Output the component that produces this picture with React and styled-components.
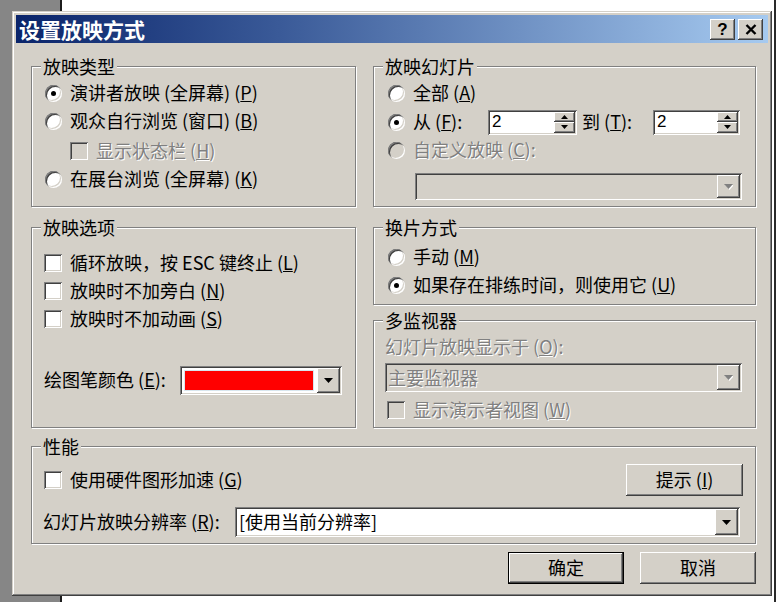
import React from 'react'
import styled, { createGlobalStyle } from 'styled-components'

const FACE = '#d4d0c8'
const RAISED = `inset -1px -1px #404040, inset 1px 1px #fff, inset -2px -2px #808080, inset 2px 2px ${FACE}`
const SUNKEN = `inset 1px 1px #808080, inset -1px -1px #fff, inset 2px 2px #404040, inset -2px -2px ${FACE}`

const GlobalStyle = createGlobalStyle`
  *, *::before, *::after { box-sizing: border-box; }
  html, body { margin: 0; padding: 0; }
  body {
    width: 779px;
    height: 602px;
    overflow: hidden;
    background: #fff;
    font-family: "Noto Sans CJK SC", "Noto Sans", sans-serif;
    font-size: 18px;
    line-height: 1.2;
    color: #000;
  }
`

const Desktop = styled.div`
  position: relative;
  display: flex;
  width: 779px;
  height: 602px;
  background: #fff;
`

const SideStrip = styled.div`
  width: 62px;
  background: #868686;
  border-right: 2px solid #1c1c1c;
`

const BackWindow = styled.div`
  width: 714px;
  background: #fff;
  border-right: 2px solid #2a2a2a;
`

const Dialog = styled.div`
  position: absolute;
  left: 12px;
  top: 11px;
  width: 760px;
  height: 585px;
  padding: 4px;
  display: flex;
  flex-direction: column;
  background: ${FACE};
  box-shadow: inset -1px -1px #404040, inset 1px 1px ${FACE}, inset -2px -2px #808080, inset 2px 2px #fff;
`

const TitleBar = styled.div`
  height: 28px;
  display: flex;
  align-items: center;
  padding: 0 5px 0 3px;
  background: linear-gradient(90deg, #0a246a 0%, #3a5a98 35%, #a6caf0 100%);
  color: #fff;
`

const Title = styled.span`
  flex: 1;
  font-size: 21px;
  font-weight: bold;
  line-height: 28px;
`

const CaptionButtons = styled.div`
  display: flex;
  gap: 3px;
`

const CaptionButton = styled.div`
  width: 25px;
  height: 21px;
  display: grid;
  place-items: center;
  background: ${FACE};
  box-shadow: ${RAISED};
  color: #000;
  font: bold 17px "Liberation Sans", sans-serif;
  line-height: 1;
`

const Client = styled.div`
  flex: 1;
  display: flex;
  flex-direction: column;
  padding: 13px 12px 8px 15px;
`

const MainGrid = styled.div`
  display: grid;
  grid-template-columns: 325px 383px;
  grid-template-rows: 151px 211px;
  column-gap: 17px;
  row-gap: 10px;
`

const Stack = styled.div`
  display: flex;
  flex-direction: column;
`

const Group = styled.div`
  position: relative;
  display: flex;
  flex-direction: column;
  align-items: flex-start;
  margin-top: ${p => p.$mt ?? 10}px;
  height: ${p => (p.$h ? `${p.$h}px` : 'auto')};
  flex: ${p => (p.$grow ? 1 : 'none')};
  padding: ${p => p.$pad};
  border: 1px solid #808080;
  box-shadow: inset 1px 1px #fff, 1px 1px #fff;
`

const Legend = styled.span`
  position: absolute;
  top: -11px;
  left: 9px;
  padding: 0 2px;
  background: ${FACE};
  line-height: 20px;
`

const Row = styled.div`
  display: flex;
  align-items: center;
  gap: 8px;
  height: ${p => p.$h || 28}px;
  margin-top: ${p => p.$mt || 0}px;
  margin-left: ${p => p.$ml || 0}px;
  align-self: ${p => (p.$full ? 'stretch' : 'flex-start')};
  justify-content: ${p => (p.$split ? 'space-between' : 'flex-start')};
  white-space: nowrap;
  color: ${p => (p.$disabled ? '#808080' : '#000')};
  text-shadow: ${p => (p.$disabled ? '1px 1px #fff' : 'none')};
`

const Label = styled.span`
  display: inline-block;
  width: ${p => (p.$w ? `${p.$w}px` : 'auto')};
  margin-left: ${p => p.$ml || 0}px;
`

const Radio = styled.span`
  width: 17px;
  height: 17px;
  flex: none;
  display: grid;
  place-items: center;
  border-radius: 50%;
  background: ${p => (p.$disabled ? FACE : '#fff')};
  box-shadow: inset 1px 1px #808080, inset -1px -1px #fff, inset 2px 2px #404040, inset -2px -2px ${FACE};

  &::after {
    content: '';
    display: ${p => (p.$checked ? 'block' : 'none')};
    width: 5px;
    height: 5px;
    border-radius: 50%;
    background: #000;
  }
`

const Check = styled.span`
  width: 18px;
  height: 18px;
  flex: none;
  background: ${p => (p.$disabled ? FACE : '#fff')};
  box-shadow: ${SUNKEN};
`

const Field = styled.div`
  display: flex;
  width: ${p => (p.$w ? `${p.$w}px` : 'auto')};
  flex: ${p => (p.$w ? 'none' : 1)};
  height: ${p => p.$h || 27}px;
  margin-top: ${p => p.$mt || 0}px;
  margin-left: ${p => p.$ml || 0}px;
  margin-right: ${p => p.$mr || 0}px;
  padding: 2px;
  background: ${p => (p.$disabled ? FACE : '#fff')};
  box-shadow: ${SUNKEN};
  color: ${p => (p.$disabled ? '#808080' : '#000')};
  text-shadow: ${p => (p.$disabled ? '1px 1px #fff' : 'none')};
`

const FieldText = styled.span`
  flex: 1;
  display: flex;
  align-items: center;
  padding-left: ${p => p.$pl ?? 3}px;
  white-space: nowrap;
  font-family: ${p => (p.$latin ? '"Liberation Sans", sans-serif' : 'inherit')};
  font-size: ${p => (p.$latin ? '17px' : 'inherit')};
`

const Swatch = styled.span`
  flex: 1;
  margin: 2px 3px 2px 2px;
  background: #ff0000;
  border: 1px solid #d8e6ee;
`

const DropButton = styled.div`
  width: ${p => p.$w || 23}px;
  flex: none;
  display: grid;
  place-items: center;
  background: ${FACE};
  box-shadow: ${RAISED};
`

const SpinButtons = styled.div`
  width: 21px;
  flex: none;
  display: flex;
  flex-direction: column;
`

const SpinButton = styled.div`
  flex: 1;
  display: grid;
  place-items: center;
  background: ${FACE};
  box-shadow: ${RAISED};
`

const PushButton = styled.div`
  width: ${p => p.$w || 116}px;
  height: 32px;
  display: grid;
  place-items: center;
  background: ${FACE};
  border: ${p => (p.$default ? '1px solid #000' : 'none')};
  box-shadow: ${RAISED};
`

const ButtonBar = styled.div`
  display: flex;
  justify-content: flex-end;
  gap: 16px;
  margin-top: 8px;
`

const Arrow = ({ dir = 'down', disabled, w = 9, h = 5 }) => (
  <svg width={w} height={h + (disabled ? 1 : 0)} viewBox={`0 0 ${w} ${h + (disabled ? 1 : 0)}`}>
    {disabled && (
      <polygon
        points={dir === 'down' ? `1,1 ${w + 1},1 ${w / 2 + 1},${h + 1}` : `${w / 2 + 1},1 ${w + 1},${h + 1} 1,${h + 1}`}
        fill="#fff"
      />
    )}
    <polygon
      points={dir === 'down' ? `0,0 ${w},0 ${w / 2},${h}` : `${w / 2},0 ${w},${h} 0,${h}`}
      fill={disabled ? '#808080' : '#000'}
    />
  </svg>
)

const CloseGlyph = () => (
  <svg width="12" height="11" viewBox="0 0 12 11">
    <path d="M1.5 1 L10.5 10 M10.5 1 L1.5 10" stroke="#000" strokeWidth="2.4" />
  </svg>
)

const Spin = ({ value, w }) => (
  <Field $w={w} $h={25}>
    <FieldText $latin $pl={2}>{value}</FieldText>
    <SpinButtons>
      <SpinButton><Arrow dir="up" w={7} h={4} /></SpinButton>
      <SpinButton><Arrow dir="down" w={7} h={4} /></SpinButton>
    </SpinButtons>
  </Field>
)

export default function App() {
  return (
    <>
      <GlobalStyle />
      <Desktop>
        <SideStrip />
        <BackWindow />

        <Dialog>
          <TitleBar>
            <Title>设置放映方式</Title>
            <CaptionButtons>
              <CaptionButton>?</CaptionButton>
              <CaptionButton><CloseGlyph /></CaptionButton>
            </CaptionButtons>
          </TitleBar>

          <Client>
            <MainGrid>
              <Group $pad="12px 0 0 13px">
                <Legend>放映类型</Legend>
                <Row $h={28}>
                  <Radio $checked />
                  <span>演讲者放映 (全屏幕) (<u>P</u>)</span>
                </Row>
                <Row $h={28}>
                  <Radio />
                  <span>观众自行浏览 (窗口) (<u>B</u>)</span>
                </Row>
                <Row $h={32} $ml={25} $disabled>
                  <Check $disabled />
                  <span>显示状态栏 (<u>H</u>)</span>
                </Row>
                <Row $h={24}>
                  <Radio />
                  <span>在展台浏览 (全屏幕) (<u>K</u>)</span>
                </Row>
              </Group>

              <Group $pad="12px 0 0 14px">
                <Legend>放映幻灯片</Legend>
                <Row $h={28}>
                  <Radio />
                  <span>全部 (<u>A</u>)</span>
                </Row>
                <Row $h={30}>
                  <Radio $checked />
                  <Label $w={67}>从 (<u>F</u>):</Label>
                  <Spin value="2" w={89} />
                  <Label $w={63} $ml={-3}>到 (<u>T</u>):</Label>
                  <Spin value="2" w={87} />
                </Row>
                <Row $h={26} $disabled>
                  <Radio $disabled />
                  <span>自定义放映 (<u>C</u>):</span>
                </Row>
                <Field $w={327} $h={27} $mt={10} $ml={27} $disabled>
                  <FieldText />
                  <DropButton><Arrow disabled /></DropButton>
                </Field>
              </Group>

              <Group $pad="21px 0 0 12px">
                <Legend>放映选项</Legend>
                <Row>
                  <Check />
                  <span>循环放映，按 ESC 键终止 (<u>L</u>)</span>
                </Row>
                <Row>
                  <Check />
                  <span>放映时不加旁白 (<u>N</u>)</span>
                </Row>
                <Row>
                  <Check />
                  <span>放映时不加动画 (<u>S</u>)</span>
                </Row>
                <Row $h={30} $mt={32}>
                  <Label $w={128}>绘图笔颜色 (<u>E</u>):</Label>
                  <Field $w={162} $h={29}>
                    <Swatch />
                    <DropButton><Arrow /></DropButton>
                  </Field>
                </Row>
              </Group>

              <Stack>
                <Group $h={78} $pad="15px 0 0 14px">
                  <Legend>换片方式</Legend>
                  <Row>
                    <Radio />
                    <span>手动 (<u>M</u>)</span>
                  </Row>
                  <Row>
                    <Radio $checked />
                    <span>如果存在排练时间，则使用它 (<u>U</u>)</span>
                  </Row>
                </Group>

                <Group $mt={15} $grow $pad="15px 0 0 11px">
                  <Legend>多监视器</Legend>
                  <Row $h={22} $disabled>
                    <span>幻灯片放映显示于 (<u>O</u>):</span>
                  </Row>
                  <Field $w={357} $h={29} $mt={5} $disabled>
                    <FieldText $pl={1}>主要监视器</FieldText>
                    <DropButton><Arrow disabled /></DropButton>
                  </Field>
                  <Row $mt={4} $ml={2} $disabled>
                    <Check $disabled />
                    <span>显示演示者视图 (<u>W</u>)</span>
                  </Row>
                </Group>
              </Stack>
            </MainGrid>

            <Group $mt={18} $h={98} $pad="17px 12px 0 12px">
              <Legend>性能</Legend>
              <Row $h={32} $full $split>
                <Row $h={32}>
                  <Check />
                  <span>使用硬件图形加速 (<u>G</u>)</span>
                </Row>
                <PushButton $w={117}>
                  <span>提示 (<u>I</u>)</span>
                </PushButton>
              </Row>
              <Row $h={30} $mt={11} $full>
                <Label $w={184} $ml={-1}>幻灯片放映分辨率 (<u>R</u>):</Label>
                <Field $h={30} $mr={3}>
                  <FieldText $pl={2}>[使用当前分辨率]</FieldText>
                  <DropButton><Arrow /></DropButton>
                </Field>
              </Row>
            </Group>

            <ButtonBar>
              <PushButton $default>确定</PushButton>
              <PushButton>取消</PushButton>
            </ButtonBar>
          </Client>
        </Dialog>
      </Desktop>
    </>
  )
}
